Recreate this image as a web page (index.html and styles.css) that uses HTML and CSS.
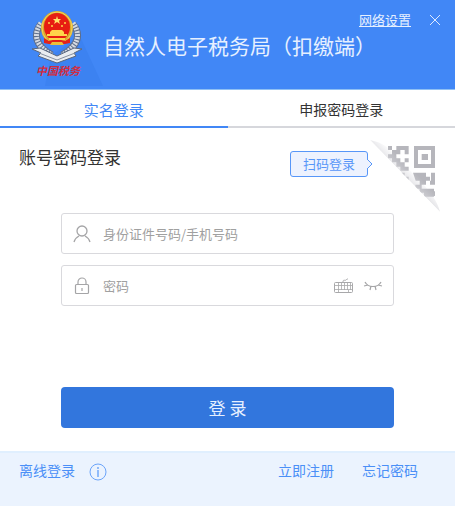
FILE: index.html
```html
<!DOCTYPE html>
<html lang="zh-CN">
<head>
<meta charset="utf-8">
<title>自然人电子税务局（扣缴端）</title>
<link rel="stylesheet" href="styles.css">
</head>
<body>
<header class="header">
  <div class="brand">
    <svg class="emblem" viewBox="0 0 50 54" aria-hidden="true">
      <g fill="none" stroke="#5f6f8c" stroke-width="7">
        <path d="M9 14C1 24 3 36 20 45"/><path d="M41 14C49 24 47 36 30 45"/>
      </g>
      <g fill="none" stroke="#d5dae2" stroke-width="5" stroke-dasharray="2 1">
        <path d="M9 13C1 24 3 36 20 45"/><path d="M41 13C49 24 47 36 30 45"/>
      </g>
      <path d="M0 39l8-1 17 8 17-8 8 1-8 4 2 3-19 7-19-7 3-3z" fill="#e9ecf0" stroke="#59667c" stroke-width="1"/>
      <path d="M7 43l18 7 18-7" fill="none" stroke="#87909f" stroke-width="1"/>
      <ellipse cx="25" cy="18" rx="16" ry="17" fill="#d9a92e"/>
      <ellipse cx="25" cy="18" rx="15" ry="16" fill="none" stroke="#f2d65c" stroke-width="1"/>
      <path d="M12 28l5 3 8-2 8 2 5-3v5l-5 1H17l-5-1z" fill="#e2231a"/>
      <ellipse cx="25" cy="17" rx="13" ry="14" fill="#e71d12"/>
      <path d="M25 6l1 3h3l-2 2 1 3-3-2-3 2 1-3-2-2h3z" fill="#ffe36a"/>
      <g fill="#ffd54a"><circle cx="17" cy="13" r="1"/><circle cx="20" cy="16" r="1"/><circle cx="30" cy="16" r="1"/><circle cx="33" cy="13" r="1"/>
      <path d="M18 22l2-2h10l2 2v2h3v2H15v-2h3zM17 28h16v2H17z"/></g>
      <path d="M20 32h10l2 3H18z" fill="#edbf3a"/>
    </svg>
    <span class="brand-name">中国税务</span>
  </div>
  <h1 class="title">自然人电子税务局（扣缴端）</h1>
  <div class="window-tools">
    <a class="network" href="#">网络设置</a>
    <button class="close" type="button" aria-label="关闭">
      <svg viewBox="0 0 12 12"><path d="M1 1l10 10M11 1L1 11" fill="none" stroke="#dce9ff" stroke-width="1"/></svg>
    </button>
  </div>
</header>
<nav class="tabs">
  <button class="tab tab-active" type="button">实名登录</button>
  <button class="tab" type="button">申报密码登录</button>
</nav>
<main class="main">
  <div class="mode">
    <h2 class="mode-title">账号密码登录</h2>
    <button class="scan" type="button">扫码登录
      <svg class="scan-arrow" viewBox="0 0 6 10" aria-hidden="true"><path d="M0 0l5 5-5 5" fill="#edf2fe" stroke="#5796f8" stroke-width="1"/></svg>
    </button>
    <svg class="qr" viewBox="0 0 210 225" aria-hidden="true">
      <defs>
        <linearGradient id="fold" gradientUnits="userSpaceOnUse" x1="90" y1="96" x2="112" y2="74">
          <stop offset="0" stop-color="#e6e6e9"/><stop offset="1" stop-color="#fff"/>
        </linearGradient>
        <linearGradient id="ink" gradientUnits="userSpaceOnUse" x1="90" y1="96" x2="112" y2="74">
          <stop offset="0" stop-color="#cbcbd0"/><stop offset="1" stop-color="#b6b6bc"/>
        </linearGradient>
        <clipPath id="corner"><path d="M0 0L210 216V0z"/></clipPath>
      </defs>
      <g clip-path="url(#corner)">
        <path d="M0 0C40 8 60 25 90 60S200 160 210 216z" fill="url(#fold)"/>
        <g fill="url(#ink)">
          <path d="M54 18h12v12H54zM79 18h37v25h-12V30H91v13H79v12H54V43h12V30h13zM79 55h12v12h13V55h12v12h-12v13h12v12H91V80H79V67H66V55z"/>
          <path fill-rule="evenodd" d="M132 18h63v66h-63zm12 12v42h39V30z"/>
          <path d="M155 42h19v18h-19zM91 98h13v12h12v18h-12v-9H91zM129 98h39v12h12v12h12v12h-12v-12h-12v12h-13v12h13v12h12v-12h12v24h-30v-12h-13v-12h-13v-12h13v-12h-12zM183 98h12v36h-12zM168 146h15v8h12v14h-27z"/>
        </g>
      </g>
    </svg>
  </div>
  <form class="form">
    <div class="field">
      <label class="field-icon" for="account" aria-label="账号">
        <svg viewBox="0 0 18 18"><g fill="none" stroke="#a5a5a7" stroke-width="1.3"><circle cx="9" cy="6" r="5"/><path d="M1 17c1-4 3-5 5-6M17 17c-1-4-3-5-5-6"/></g></svg>
      </label>
      <input class="input" id="account" type="text" placeholder="身份证件号码/手机号码">
    </div>
    <div class="field">
      <label class="field-icon" for="password" aria-label="密码">
        <svg viewBox="0 0 18 18"><g fill="none" stroke="#a5a5a7" stroke-width="1.2"><rect x="2.500" y="7.500" width="13" height="9" rx="1"/><path d="M5 7V5a4 4 0 0 1 8 0v2M9 11v3"/></g></svg>
      </label>
      <input class="input" id="password" type="password" placeholder="密码">
      <button class="field-tool" type="button" aria-label="软键盘">
        <svg viewBox="0 0 20 18"><g fill="none" stroke="#a8a8aa"><rect x="1.500" y="5.500" width="18" height="10" rx="1"/><path d="M10 5c0-3 2-1 3-2s1-1 2-1"/><path d="M2 8.500h17M2 12.500h17" stroke-width=".8"/><path d="M5.500 6v7M8.500 6v7M11.500 6v7M14.500 6v7M17.500 6v7M5.500 13v2M15.500 13v2" stroke-width=".8"/></g></svg>
      </button>
      <button class="field-tool" type="button" aria-label="显示密码">
        <svg viewBox="0 0 20 18"><path d="M2 5c3 6 13 6 16 0M5 8l-4 1M8 9l-1 4M12 9l1 4M15 8l4 1" fill="none" stroke="#a5a5a7" stroke-width="1.200"/></svg>
      </button>
    </div>
    <button class="submit" type="submit">登 录</button>
  </form>
</main>
<footer class="footer">
  <a href="#">离线登录</a>
  <button class="info" type="button" aria-label="说明">
    <svg viewBox="0 0 18 18"><circle cx="9" cy="9" r="8" fill="none" stroke="#6ba4fa"/><path d="M9 7v7M9 4v2" stroke="#6ba4fa" stroke-width="1.400"/></svg>
  </button>
  <a class="register" href="#">立即注册</a>
  <a href="#">忘记密码</a>
</footer>
</body>
</html>
```
FILE: styles.css
```css
* {
  box-sizing: border-box;
}

body {
  display: flex;
  flex-direction: column;
  min-height: 100vh;
  margin: 0;
  background: #fff;
  color: #333;
  font-family: "Noto Sans CJK SC", sans-serif;
  font-size: 14px;
}

button {
  padding: 0;
  border: 0;
  background: none;
  color: inherit;
  font: inherit;
}

svg {
  display: block;
}

a {
  color: #4a8ff7;
  text-decoration: none;
}

.header {
  display: flex;
  height: 90px;
  padding-left: 32px;
  border-bottom: 1px solid #8fc0f4;
  background: #4187f6;
  color: #e6f0ff;
}

.brand {
  position: relative;
  width: 71px;
  padding-top: 10px;
}

.brand::before {
  position: absolute;
  right: 0;
  bottom: 3px;
  width: 58px;
  height: 50px;
  background: #3c82f1;
  clip-path: polygon(0 100%, 10% 40%, 60% 0, 100% 100%);
  content: "";
}

.emblem {
  position: relative;
  width: 50px;
  height: 54px;
}

.brand-name {
  display: block;
  position: relative;
  padding-left: 4px;
  color: #d22c3d;
  font-size: 11px;
  font-style: italic;
  font-weight: 700;
  line-height: 12px;
}

.title {
  flex: 1;
  margin: 0;
  padding-top: 31px;
  font-size: 21px;
  font-weight: 400;
  line-height: 28px;
  white-space: nowrap;
}

.window-tools {
  display: flex;
  align-items: flex-start;
  gap: 18px;
  width: 96px;
  margin-left: -96px;
  padding-top: 12px;
}

.network {
  color: #e6f0ff;
  font-size: 13px;
  line-height: 16px;
  text-decoration: underline;
  white-space: nowrap;
}

.close {
  width: 12px;
  margin-top: 2px;
}

.tabs {
  display: flex;
  height: 38px;
}

.tab {
  flex: 1;
  padding-top: 2px;
  border-bottom: 2px solid #d6d7dc;
  font-size: 14px;
}

.tab-active {
  border-color: #4187f6;
  color: #4187f6;
  font-size: 15px;
}

.mode {
  display: flex;
  height: 85px;
  padding: 12px 15px 0 19px;
}

.mode-title {
  flex: 1;
  margin: 0;
  padding-top: 5px;
  font-size: 17px;
  font-weight: 400;
  line-height: 24px;
}

.scan {
  position: relative;
  width: 78px;
  height: 26px;
  margin-top: 11px;
  border: 1px solid #5796f8;
  border-radius: 3px;
  background: #edf2fe;
  color: #5796f8;
  font-size: 13px;
  line-height: 24px;
}

.scan-arrow {
  position: absolute;
  top: 7px;
  left: 100%;
  width: 6px;
  height: 10px;
}

.qr {
  width: 70px;
  height: 75px;
  margin-left: 2px;
}

.form {
  display: flex;
  flex-direction: column;
  gap: 11px;
  padding: 0 61px;
}

.field {
  display: flex;
  align-items: center;
  gap: 10px;
  height: 41px;
  padding: 0 10px 0 11px;
  border: 1px solid #d9d9dd;
  border-radius: 3px;
}

.field-icon {
  width: 18px;
}

.input {
  flex: 1;
  min-width: 0;
  height: 100%;
  margin-left: 2px;
  padding: 0;
  border: 0;
  outline: 0;
  background: none;
  color: #333;
  font: inherit;
  font-size: 13px;
}

.input::placeholder {
  color: #a0a0a0;
}

.field-tool {
  width: 20px;
}

.submit {
  height: 41px;
  margin: 70px 0 23px;
  border-radius: 4px;
  background: #3276dd;
  color: #e6f0ff;
  font-size: 17px;
}

.footer {
  display: flex;
  flex: 1;
  align-items: flex-start;
  padding: 7px 37px 12px 19px;
  border-top: 2px solid #e0effe;
  background: #ebf3fe;
  line-height: 20px;
}

.info {
  width: 18px;
  margin: 3px 0 0 14px;
}

.register {
  margin: 0 28px 0 auto;
}
```
